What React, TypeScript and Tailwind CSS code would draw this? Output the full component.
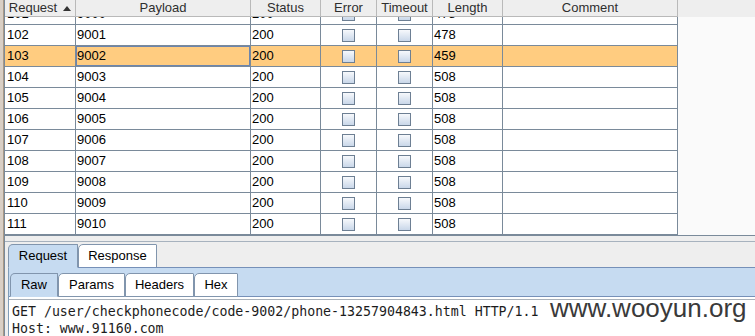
import React from "react";

const cols = "grid grid-cols-[71px_175px_70px_56px_56px_70px_175px_1fr]";

const rows = [
  { id: 101, payload: "9000", status: "200", length: "478" },
  { id: 102, payload: "9001", status: "200", length: "478" },
  { id: 103, payload: "9002", status: "200", length: "459", selected: true },
  { id: 104, payload: "9003", status: "200", length: "508" },
  { id: 105, payload: "9004", status: "200", length: "508" },
  { id: 106, payload: "9005", status: "200", length: "508" },
  { id: 107, payload: "9006", status: "200", length: "508" },
  { id: 108, payload: "9007", status: "200", length: "508" },
  { id: 109, payload: "9008", status: "200", length: "508" },
  { id: 110, payload: "9009", status: "200", length: "508" },
  { id: 111, payload: "9010", status: "200", length: "508" },
];

function Checkbox() {
  return (
    <div className="w-[13px] h-[13px] border border-[#6d7f93] bg-gradient-to-b from-[#f7f9fc] to-[#c9d7e9]" />
  );
}

function HeaderCell({ children }: { children: React.ReactNode }) {
  return (
    <div className="h-[17px] flex items-center justify-center gap-[6px] border-r border-b border-[#b9b9b9] text-[#2e2e2e] leading-[16px]">
      {children}
    </div>
  );
}

function Tab({ label, active, width }: { label: string; active?: boolean; width: string }) {
  return (
    <div
      className={`${width} h-[24px] flex items-center justify-center border border-[#8195ad] rounded-tl-[5px] rounded-tr-[1px] ${
        active ? "bg-[#c6dbf1] border-b-[#c6dbf1] relative z-10" : "bg-white"
      }`}
    >
      {label}
    </div>
  );
}

export default function App() {
  return (
    <div className="w-[755px] h-[336px] flex overflow-hidden bg-white text-[13px] text-black font-['Liberation_Sans',Arial,sans-serif]">
      {/* left frame strip */}
      <div className="w-[4px] bg-[#d9cfc5] border-r border-[#a89886]" />

      <div className="flex-1 flex flex-col border-l border-[#7a8a9a] min-w-0">
        {/* results table */}
        <div className="h-[236px] flex flex-col border-b border-[#7a8a9a] bg-[#fafafa]">
          <div className={`${cols} bg-[#eeeeee]`}>
            <HeaderCell>
              <span>Request</span>
              <svg width="8" height="5" viewBox="0 0 8 5">
                <path d="M0 5 L4 0 L8 5 Z" fill="#333" />
              </svg>
            </HeaderCell>
            <HeaderCell>Payload</HeaderCell>
            <HeaderCell>Status</HeaderCell>
            <HeaderCell>Error</HeaderCell>
            <HeaderCell>Timeout</HeaderCell>
            <HeaderCell>Length</HeaderCell>
            <HeaderCell>Comment</HeaderCell>
            <div className="h-[17px]" />
          </div>

          <div className="flex-1 overflow-hidden">
            {rows.map((r, i) => {
              const bg = r.selected ? "bg-[#ffcc80]" : "bg-white";
              const cell = `h-[21px] flex items-center border-r border-b border-[#7a8a9a] ${bg}`;
              return (
                <div key={r.id} className={`${cols} ${i === 0 ? "-mt-[13px]" : ""}`}>
                  <div className={`${cell} pl-[2px]`}>{r.id}</div>
                  <div
                    className={`${cell} pl-[1px] ${
                      r.selected ? "shadow-[inset_0_0_0_1px_#6c85ad]" : ""
                    }`}
                  >
                    {r.payload}
                  </div>
                  <div className={`${cell} pl-[1px]`}>{r.status}</div>
                  <div className={`${cell} justify-center`}>
                    <Checkbox />
                  </div>
                  <div className={`${cell} justify-center`}>
                    <Checkbox />
                  </div>
                  <div className={`${cell} pl-[1px]`}>{r.length}</div>
                  <div className={cell} />
                  <div className="h-[21px] bg-[#fafafa]" />
                </div>
              );
            })}
          </div>
        </div>

        {/* request / response viewer */}
        <div className="flex-1 flex flex-col bg-[#eeeeee] relative">
          <div className="h-[5px]" />
          <div className="border-t border-[#a7b2be] pt-[2px] pl-[3px] flex items-end h-[26px]">
            <div className="flex -mb-px">
              <Tab label="Request" active width="w-[70px]" />
              <Tab label="Response" width="w-[79px]" />
            </div>
          </div>

          <div className="ml-[3px] flex-1 flex flex-col border-l border-[#7f9db9]">
            <div className="h-[30px] bg-[#c6dbf1] border-y border-[#7690b8] flex items-end pl-[1px]">
              <div className="flex -mb-px">
                <Tab label="Raw" active width="w-[48px]" />
                <Tab label="Params" width="w-[67px]" />
                <Tab label="Headers" width="w-[69px]" />
                <Tab label="Hex" width="w-[44px]" />
              </div>
            </div>
            <div className="h-[2px] bg-white" />
            <div className="flex-1 bg-white border-t border-[#a9b1ba] pt-[3px] pl-[3px] font-['DejaVu_Sans_Mono',monospace] text-[13.25px] leading-[17px] text-[#1c1c1c] whitespace-pre">
              <div>GET /user/checkphonecode/code-9002/phone-13257904843.html HTTP/1.1</div>
              <div>Host: www.91160.com</div>
            </div>
          </div>

          {/* watermark */}
          <div className="absolute left-[545px] top-[59px] text-[26px] leading-[26px] text-[#3a3a3a] font-['Liberation_Sans',Arial,sans-serif]">
            www.wooyun.org
          </div>
        </div>
      </div>
    </div>
  );
}
